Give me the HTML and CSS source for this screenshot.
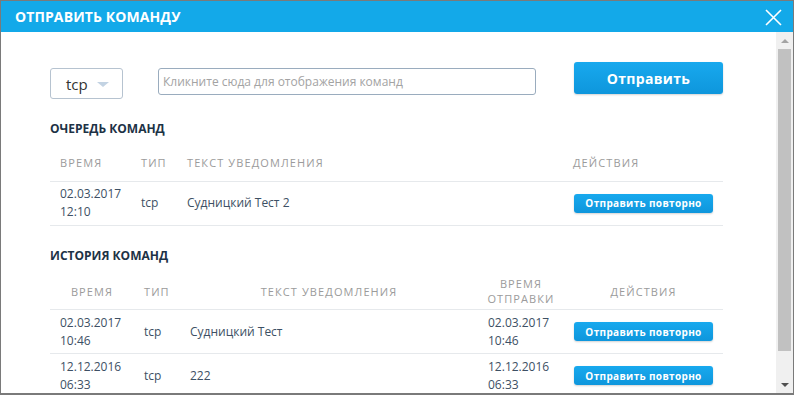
FILE: index.html
```html
<!DOCTYPE html>
<html lang="ru">
<head>
<meta charset="utf-8">
<title>Отправить команду</title>
<link rel="stylesheet" href="styles.css">
</head>
<body>
<div class="modal">
  <div class="modal-header">
    <div class="modal-title">ОТПРАВИТЬ КОМАНДУ</div>
    <svg class="close" width="17" height="17" viewBox="0 0 17 17"><path d="M1 1L16 16M16 1L1 16" stroke="#fff" stroke-width="1.6" fill="none"/></svg>
  </div>
  <div class="modal-body">
    <div class="content">
      <div class="controls">
        <div class="select"><span>tcp</span><span class="caret"></span></div>
        <div class="input">Кликните сюда для отображения команд</div>
        <div class="btn-send">Отправить</div>
      </div>

      <div class="section-title first">ОЧЕРЕДЬ КОМАНД</div>
      <table class="tbl">
        <colgroup><col style="width:81px"><col style="width:46px"><col style="width:386px"><col style="width:160px"></colgroup>
        <thead>
          <tr><th>ВРЕМЯ</th><th>ТИП</th><th>ТЕКСТ УВЕДОМЛЕНИЯ</th><th>ДЕЙСТВИЯ</th></tr>
        </thead>
        <tbody>
          <tr><td class="time">02.03.2017<br>12:10</td><td>tcp</td><td>Судницкий Тест 2</td><td class="act"><span class="btn-small">Отправить повторно</span></td></tr>
        </tbody>
      </table>

      <div class="section-title second">ИСТОРИЯ КОМАНД</div>
      <table class="tbl centered">
        <colgroup><col style="width:84px"><col style="width:46px"><col style="width:298px"><col style="width:86px"><col style="width:159px"></colgroup>
        <thead>
          <tr><th>ВРЕМЯ</th><th class="left">ТИП</th><th>ТЕКСТ УВЕДОМЛЕНИЯ</th><th>ВРЕМЯ<br>ОТПРАВКИ</th><th>ДЕЙСТВИЯ</th></tr>
        </thead>
        <tbody>
          <tr><td class="time">02.03.2017<br>10:46</td><td>tcp</td><td>Судницкий Тест</td><td class="time">02.03.2017<br>10:46</td><td class="act"><span class="btn-small">Отправить повторно</span></td></tr>
          <tr><td class="time">12.12.2016<br>06:33</td><td>tcp</td><td>222</td><td class="time">12.12.2016<br>06:33</td><td class="act"><span class="btn-small">Отправить повторно</span></td></tr>
        </tbody>
      </table>
    </div>
    <div class="scrollbar">
      <div class="sb-arrow"><span class="tri-up"></span></div>
      <div class="sb-thumb"></div>
      <div class="sb-space"></div>
      <div class="sb-arrow"><span class="tri-down"></span></div>
    </div>
  </div>
</div>
</body>
</html>
```
FILE: styles.css
```css
* { box-sizing: border-box; }
html, body { margin: 0; padding: 0; background: #fff; }
body { font-family: "Open Sans", "Noto Sans", sans-serif; }

.modal {
  width: 794px;
  height: 395px;
  border: 1px solid #7a7a7a;
  border-bottom-width: 2px;
  display: flex;
  flex-direction: column;
  overflow: hidden;
  background: #fff;
}

.modal-header {
  height: 31px;
  flex: none;
  background: #13a9e9;
  display: flex;
  align-items: center;
  justify-content: space-between;
  padding: 0 11px 0 14px;
}
.modal-title {
  color: #fff;
  font-weight: 700;
  font-size: 14px;
  letter-spacing: 0.1px;
}
.close { display: block; margin-top: 1px; }

.modal-body {
  flex: 1;
  display: flex;
  min-height: 0;
}
.content {
  flex: 1;
  padding: 30px 0 0 49px;
  overflow: hidden;
}

.controls {
  display: flex;
  align-items: flex-start;
  width: 673px;
}
.select {
  width: 73px;
  height: 31px;
  margin-top: 6px;
  margin-right: 35px;
  border: 1px solid #b6c3d0;
  border-radius: 3px;
  display: flex;
  align-items: center;
  padding-left: 15px;
  font-size: 15px;
  color: #333;
}
.caret {
  width: 0; height: 0;
  border-left: 6px solid transparent;
  border-right: 6px solid transparent;
  border-top: 5px solid #c3d3e3;
  margin-left: 9px;
  margin-top: 2px;
}
.input {
  width: 378px;
  height: 27px;
  margin-top: 6px;
  border: 1px solid #9aacbe;
  border-radius: 3px;
  padding-left: 4px;
  font-size: 12px;
  line-height: 25px;
  color: #a3a3a3;
}
.btn-send {
  margin-left: auto;
  width: 149px;
  height: 32px;
  border-radius: 3px;
  background: linear-gradient(#18a9ee, #0e96dc);
  box-shadow: 0 1px 2px rgba(0,0,0,0.18);
  color: #fff;
  font-weight: 700;
  font-size: 14px;
  display: flex;
  align-items: center;
  justify-content: center;
  letter-spacing: 0.3px;
}

.section-title {
  font-size: 12px;
  font-weight: 700;
  line-height: 17px;
  color: #1d3246;
}
.section-title.first { margin: 21px 0 8px; }
.section-title.second { margin: 21px 0 10px; }

.tbl {
  width: 673px;
  table-layout: fixed;
  border-collapse: collapse;
}
.tbl th {
  height: 36px;
  padding: 0 10px;
  font-size: 11px;
  font-weight: 400;
  line-height: 15px;
  letter-spacing: 1.1px;
  color: #9b9b9b;
  text-align: left;
  vertical-align: middle;
  border-bottom: 1px solid #e6e9ec;
  white-space: nowrap;
}
.tbl.centered th { text-align: center; padding: 0 4px; }
.tbl.centered th.left { text-align: left; padding-left: 10px; }
.tbl td {
  height: 44px;
  padding: 0 10px;
  font-size: 12px;
  line-height: 18px;
  color: #3d5064;
  vertical-align: middle;
  border-bottom: 1px solid #e6e9ec;
  white-space: nowrap;
}
.tbl td.act { padding-left: 11px; }
.tbl.centered td.act { padding-left: 10px; }

.btn-small {
  display: inline-flex;
  align-items: center;
  justify-content: center;
  width: 139px;
  height: 19px;
  border-radius: 3px;
  background: linear-gradient(#18a9ee, #0e96dc);
  box-shadow: 0 1px 2px rgba(0,0,0,0.18);
  color: #fff;
  font-weight: 700;
  font-size: 10px;
  letter-spacing: 0.35px;
  vertical-align: middle;
}

.scrollbar {
  width: 17px;
  flex: none;
  background: #f0f0f0;
  display: flex;
  flex-direction: column;
  align-items: center;
}
.sb-arrow {
  height: 17px;
  width: 17px;
  flex: none;
  display: flex;
  align-items: center;
  justify-content: center;
}
.tri-up {
  width: 0; height: 0;
  border-left: 4px solid transparent;
  border-right: 4px solid transparent;
  border-bottom: 4px solid #a3a3a3;
}
.tri-down {
  width: 0; height: 0;
  border-left: 4px solid transparent;
  border-right: 4px solid transparent;
  border-top: 4px solid #505050;
}
.sb-thumb {
  width: 13px;
  height: 302px;
  flex: none;
  background: #c1c1c1;
}
.sb-space { flex: 1; }
```
